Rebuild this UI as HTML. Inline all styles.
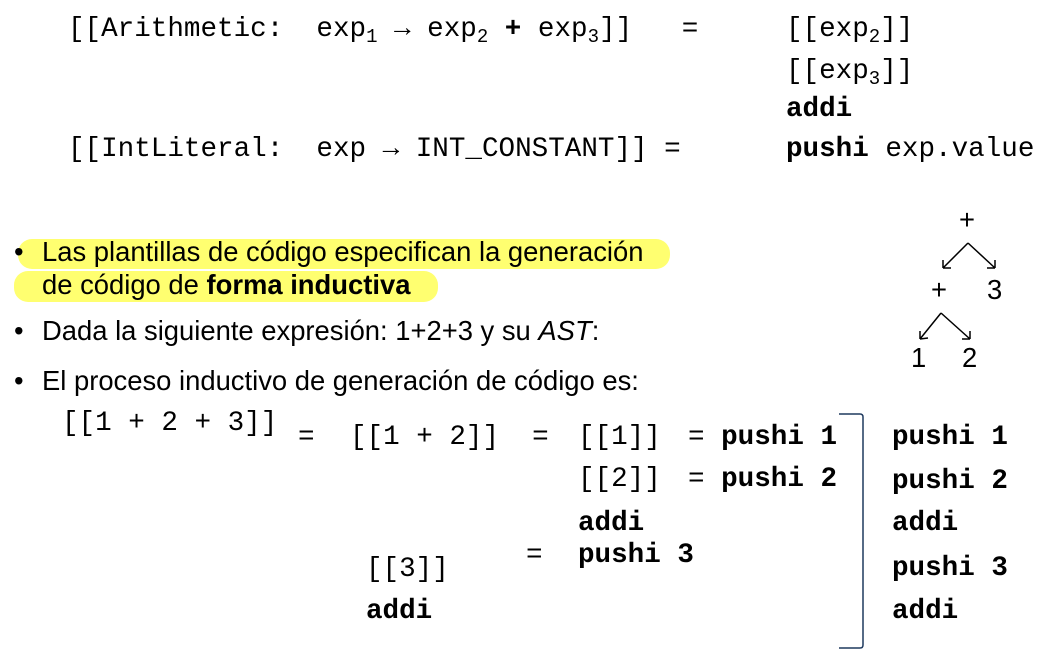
<!DOCTYPE html>
<html><head><meta charset="utf-8"><style>
body{margin:0;width:1052px;height:668px;background:#fff;position:relative;overflow:hidden;color:#000}
.m{position:absolute;font-family:"Liberation Mono",monospace;font-size:27.6px;line-height:28px;white-space:pre;margin-top:2px}
.s{position:absolute;font-family:"Liberation Sans",sans-serif;font-size:27.4px;line-height:28px;white-space:pre}
b{font-weight:bold}
sub{font-size:19px;vertical-align:-6px;line-height:0}
.hl{position:absolute;background:#ffff70;border-radius:14px}
</style></head><body>
<div class="m" style="left:68px;top:14px">[[Arithmetic:  exp<sub>1</sub> → exp<sub>2</sub> <b>+</b> exp<sub>3</sub>]]   =</div>
<div class="m" style="left:786px;top:14px">[[exp<sub>2</sub>]]</div>
<div class="m" style="left:786px;top:56px">[[exp<sub>3</sub>]]</div>
<div class="m" style="left:786px;top:94px"><b>addi</b></div>
<div class="m" style="left:68px;top:134px">[[IntLiteral:  exp → INT_CONSTANT]] =</div>
<div class="m" style="left:786px;top:134px"><b>pushi</b> exp.value</div>

<div class="hl" style="left:18px;top:239px;width:652px;height:30px"></div>
<div class="hl" style="left:14px;top:271px;width:424px;height:31px"></div>
<div class="s" style="left:14px;top:238px">•</div>
<div class="s" style="left:42px;top:238px">Las plantillas de código especifican la generación</div>
<div class="s" style="left:42px;top:271px">de código de <b>forma inductiva</b></div>
<div class="s" style="left:14px;top:317px">•</div>
<div class="s" style="left:42px;top:317px">Dada la siguiente expresión: 1+2+3 y su <i>AST</i>:</div>
<div class="s" style="left:14px;top:367px">•</div>
<div class="s" style="left:42px;top:367px">El proceso inductivo de generación de código es:</div>

<div class="s" style="left:959px;top:206px">+</div>
<div class="s" style="left:931px;top:276px">+</div>
<div class="s" style="left:987px;top:276px">3</div>
<div class="s" style="left:911px;top:344px">1</div>
<div class="s" style="left:962px;top:344px">2</div>
<svg style="position:absolute;left:0;top:0" width="1052" height="668" fill="none" stroke="#000" stroke-width="1.5">
<path d="M968 243 L943 268 M943 268 l0 -8 M943 268 l8 0"/>
<path d="M968 243 L995 268 M995 268 l0 -8 M995 268 l-8 0"/>
<path d="M941 313 L920 339 M920 339 l0 -8 M920 339 l8 -1"/>
<path d="M941 313 L970 339 M970 339 l0 -8 M970 339 l-8 0"/>
<path d="M839 414 L860 414 Q863 414 863 417 L863 645 Q863 648 860 648 L839 648" stroke="#1f3a5f" stroke-width="1.5"/>
</svg>

<div class="m" style="left:62px;top:408px">[[1 + 2 + 3]]</div>
<div class="m" style="left:298px;top:422px">=</div>
<div class="m" style="left:350px;top:422px">[[1 + 2]]  =</div>
<div class="m" style="left:578px;top:422px">[[1]]</div>
<div class="m" style="left:688px;top:422px">= <b>pushi 1</b></div>
<div class="m" style="left:578px;top:464px">[[2]]</div>
<div class="m" style="left:688px;top:464px">= <b>pushi 2</b></div>
<div class="m" style="left:578px;top:508px"><b>addi</b></div>
<div class="m" style="left:578px;top:540px"><b>pushi 3</b></div>
<div class="m" style="left:526px;top:540px">=</div>
<div class="m" style="left:366px;top:554px">[[3]]</div>
<div class="m" style="left:366px;top:596px"><b>addi</b></div>
<div class="m" style="left:892px;top:422px"><b>pushi 1</b></div>
<div class="m" style="left:892px;top:466px"><b>pushi 2</b></div>
<div class="m" style="left:892px;top:508px"><b>addi</b></div>
<div class="m" style="left:892px;top:553px"><b>pushi 3</b></div>
<div class="m" style="left:892px;top:596px"><b>addi</b></div>
</body></html>
